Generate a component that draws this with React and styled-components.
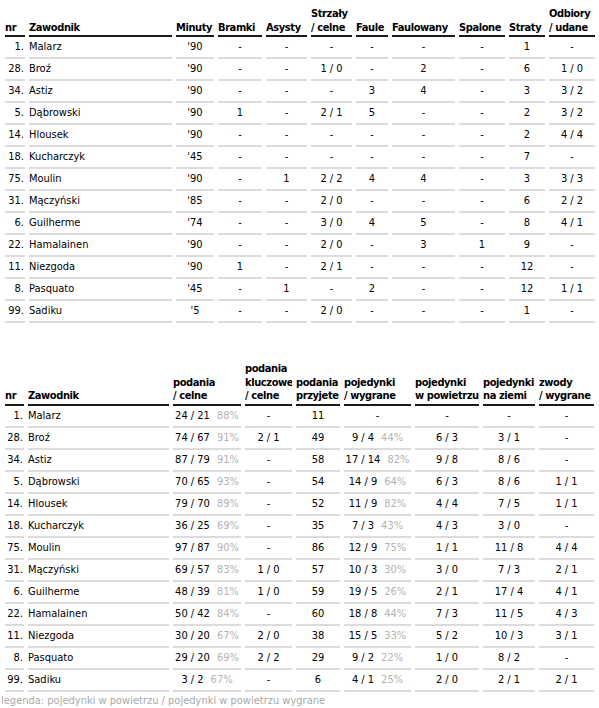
import styled, { createGlobalStyle } from "styled-components";

const GlobalStyle = createGlobalStyle`
  html, body {
    margin: 0;
    padding: 0;
    background: #fff;
  }
  body {
    font-family: "DejaVu Sans Condensed", "Liberation Sans", sans-serif;
    font-size: 11px;
    color: #000;
  }
`;

const Page = styled.div`
  padding: 7px 0 0 1px;
  display: flex;
  flex-direction: column;
  gap: 39px;
`;

const StatsTable = styled.table`
  width: ${(p) => p.$width}px;
  table-layout: fixed;
  border-collapse: separate;
  border-spacing: 4px 0;
`;

const HeadCell = styled.th`
  text-align: left;
  vertical-align: bottom;
  font-weight: bold;
  line-height: 13.5px;
  letter-spacing: -0.4px;
  padding: 0 0 1px;
  border-bottom: 2px solid #1a1a1a;
  white-space: nowrap;
  overflow: hidden;
`;

const Cell = styled.td`
  height: 20px;
  padding: 0;
  line-height: 20px;
  vertical-align: middle;
  text-align: ${(p) => p.$align || "center"};
  padding-right: ${(p) => (p.$align === "right" ? "1px" : "0")};
  border-bottom: 2px solid #dcdcdc;
  white-space: nowrap;
`;

const Pct = styled.span`
  color: #b3b3b3;
  margin-left: 7px;
`;

const Legend = styled.div`
  color: #aaa;
  line-height: 13.5px;
  margin-top: -39px;
  padding-top: 2px;
`;

const Block = styled.div``;

const firstCols = [20, 143, 38, 44, 41, 41, 32, 63, 46, 36, 46];
const firstHead = [
  ["nr"],
  ["Zawodnik"],
  ["Minuty"],
  ["Bramki"],
  ["Asysty"],
  ["Strzały", "/ celne"],
  ["Faule"],
  ["Faulowany"],
  ["Spalone"],
  ["Straty"],
  ["Odbiory", "/ udane"],
];

const firstRows = [
  ["1.", "Malarz", "'90", "-", "-", "-", "-", "-", "-", "1", "-"],
  ["28.", "Broź", "'90", "-", "-", "1 / 0", "-", "2", "-", "6", "1 / 0"],
  ["34.", "Astiz", "'90", "-", "-", "-", "3", "4", "-", "3", "3 / 2"],
  ["5.", "Dąbrowski", "'90", "1", "-", "2 / 1", "5", "-", "-", "2", "3 / 2"],
  ["14.", "Hlousek", "'90", "-", "-", "-", "-", "-", "-", "2", "4 / 4"],
  ["18.", "Kucharczyk", "'45", "-", "-", "-", "-", "-", "-", "7", "-"],
  ["75.", "Moulin", "'90", "-", "1", "2 / 2", "4", "4", "-", "3", "3 / 3"],
  ["31.", "Mączyński", "'85", "-", "-", "2 / 0", "-", "-", "-", "6", "2 / 2"],
  ["6.", "Guilherme", "'74", "-", "-", "3 / 0", "4", "5", "-", "8", "4 / 1"],
  ["22.", "Hamalainen", "'90", "-", "-", "2 / 0", "-", "3", "1", "9", "-"],
  ["11.", "Niezgoda", "'90", "1", "-", "2 / 1", "-", "-", "-", "12", "-"],
  ["8.", "Pasquato", "'45", "-", "1", "-", "2", "-", "-", "12", "1 / 1"],
  ["99.", "Sadiku", "'5", "-", "-", "2 / 0", "-", "-", "-", "1", "-"],
];

const secondCols = [19, 141, 68, 47, 44, 67, 64, 52, 55];
const secondHead = [
  ["nr"],
  ["Zawodnik"],
  ["podania", "/ celne"],
  ["podania", "kluczowe", "/ celne"],
  ["podania", "przyjete"],
  ["pojedynki", "/ wygrane"],
  ["pojedynki", "w powietrzu"],
  ["pojedynki", "na ziemi"],
  ["zwody", "/ wygrane"],
];

// [nr, name, [podania, %], kluczowe, przyjete, [pojedynki, %], powietrze, ziemia, zwody]
const secondRows = [
  ["1.", "Malarz", ["24 / 21", "88%"], "-", "11", ["-"], "-", "-", "-"],
  ["28.", "Broź", ["74 / 67", "91%"], "2 / 1", "49", ["9 / 4", "44%"], "6 / 3", "3 / 1", "-"],
  ["34.", "Astiz", ["87 / 79", "91%"], "-", "58", ["17 / 14", "82%"], "9 / 8", "8 / 6", "-"],
  ["5.", "Dąbrowski", ["70 / 65", "93%"], "-", "54", ["14 / 9", "64%"], "6 / 3", "8 / 6", "1 / 1"],
  ["14.", "Hlousek", ["79 / 70", "89%"], "-", "52", ["11 / 9", "82%"], "4 / 4", "7 / 5", "1 / 1"],
  ["18.", "Kucharczyk", ["36 / 25", "69%"], "-", "35", ["7 / 3", "43%"], "4 / 3", "3 / 0", "-"],
  ["75.", "Moulin", ["97 / 87", "90%"], "-", "86", ["12 / 9", "75%"], "1 / 1", "11 / 8", "4 / 4"],
  ["31.", "Mączyński", ["69 / 57", "83%"], "1 / 0", "57", ["10 / 3", "30%"], "3 / 0", "7 / 3", "2 / 1"],
  ["6.", "Guilherme", ["48 / 39", "81%"], "1 / 0", "59", ["19 / 5", "26%"], "2 / 1", "17 / 4", "4 / 1"],
  ["22.", "Hamalainen", ["50 / 42", "84%"], "-", "60", ["18 / 8", "44%"], "7 / 3", "11 / 5", "4 / 3"],
  ["11.", "Niezgoda", ["30 / 20", "67%"], "2 / 0", "38", ["15 / 5", "33%"], "5 / 2", "10 / 3", "3 / 1"],
  ["8.", "Pasquato", ["29 / 20", "69%"], "2 / 2", "29", ["9 / 2", "22%"], "1 / 0", "8 / 2", "-"],
  ["99.", "Sadiku", ["3 / 2", "67%"], "-", "6", ["4 / 1", "25%"], "2 / 0", "2 / 1", "2 / 1"],
];

function align(i) {
  if (i === 0) return "right";
  if (i === 1) return "left";
  return "center";
}

function Table({ cols, head, rows }) {
  const width = cols.reduce((a, b) => a + b, 0) + (cols.length + 1) * 4;
  return (
    <StatsTable $width={width}>
      <colgroup>
        {cols.map((w, i) => (
          <col key={i} style={{ width: w }} />
        ))}
      </colgroup>
      <thead>
        <tr>
          {head.map((lines, i) => (
            <HeadCell key={i}>
              {lines.map((l, j) => (
                <div key={j}>{l}</div>
              ))}
            </HeadCell>
          ))}
        </tr>
      </thead>
      <tbody>
        {rows.map((row, r) => (
          <tr key={r}>
            {row.map((v, i) => (
              <Cell key={i} $align={align(i)}>
                {Array.isArray(v) ? (
                  <>
                    {v[0]}
                    {v[1] && <Pct>{v[1]}</Pct>}
                  </>
                ) : (
                  v
                )}
              </Cell>
            ))}
          </tr>
        ))}
      </tbody>
    </StatsTable>
  );
}

export default function App() {
  return (
    <>
      <GlobalStyle />
      <Page>
        <Block>
          <Table cols={firstCols} head={firstHead} rows={firstRows} />
        </Block>
        <Block>
          <Table cols={secondCols} head={secondHead} rows={secondRows} />
        </Block>
        <Legend>legenda: pojedynki w powietrzu / pojedynki w powietrzu wygrane</Legend>
      </Page>
    </>
  );
}
